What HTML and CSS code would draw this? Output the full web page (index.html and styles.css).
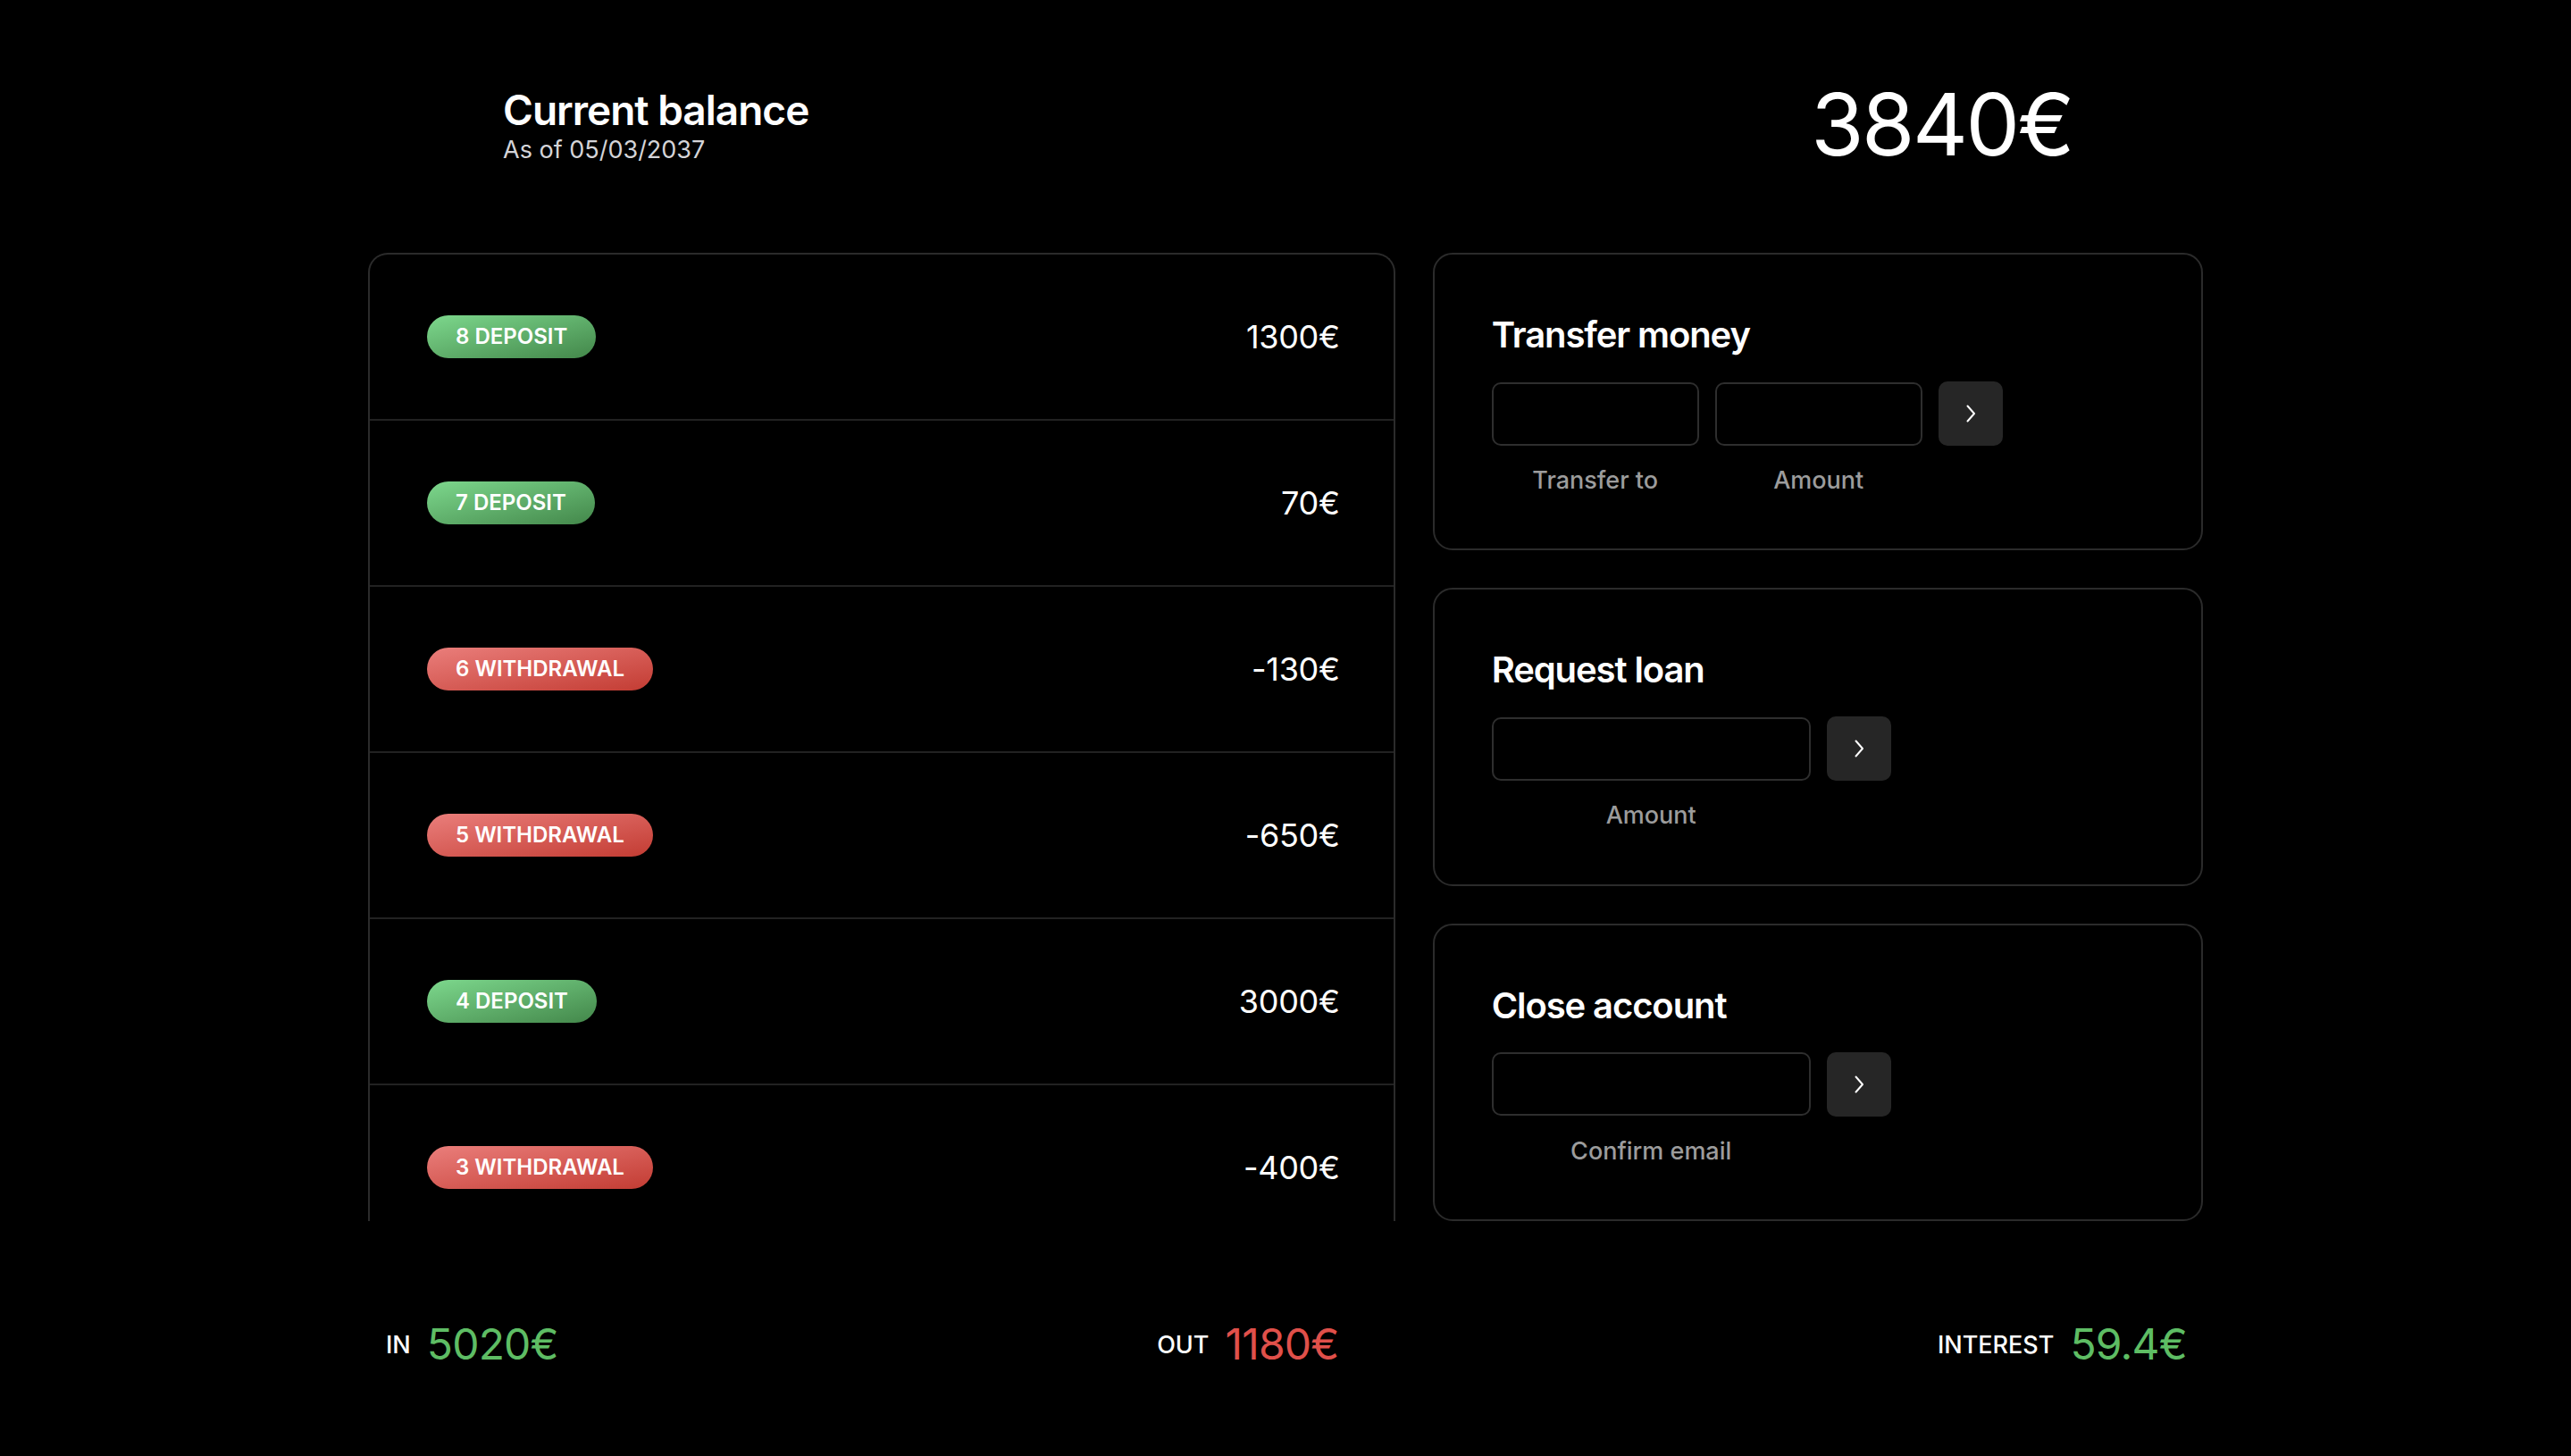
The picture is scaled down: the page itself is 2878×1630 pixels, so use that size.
FILE: index.html
```html
<!DOCTYPE html>
<html lang="en">
<head>
<meta charset="utf-8">
<title>Bankist</title>
<link rel="stylesheet" href="styles.css">
</head>
<body>
<div class="app">
  <header class="balance">
    <div class="balance-info">
      <p class="balance-label">Current balance</p>
      <p class="balance-date">As of 05/03/2037</p>
    </div>
    <p class="balance-value">3840€</p>
  </header>

  <main class="grid">
    <section class="movements">
      <div class="row"><span class="badge deposit">8 DEPOSIT</span><span class="amount">1300€</span></div>
      <div class="row"><span class="badge deposit">7 DEPOSIT</span><span class="amount">70€</span></div>
      <div class="row"><span class="badge withdrawal">6 WITHDRAWAL</span><span class="amount">-130€</span></div>
      <div class="row"><span class="badge withdrawal">5 WITHDRAWAL</span><span class="amount">-650€</span></div>
      <div class="row"><span class="badge deposit">4 DEPOSIT</span><span class="amount">3000€</span></div>
      <div class="row"><span class="badge withdrawal">3 WITHDRAWAL</span><span class="amount">-400€</span></div>
    </section>

    <div class="ops">
      <section class="card">
        <h2 class="card-title">Transfer money</h2>
        <form class="form form-transfer">
          <input class="field" type="text">
          <input class="field" type="number">
          <button class="go" type="button"><svg width="12" height="20" viewBox="0 0 12 20"><path d="M2.5 1.5 L10 10 L2.5 18.5" fill="none" stroke="#fff" stroke-width="2" stroke-linecap="round" stroke-linejoin="round"/></svg></button>
          <label class="field-label">Transfer to</label>
          <label class="field-label">Amount</label>
        </form>
      </section>

      <section class="card">
        <h2 class="card-title">Request loan</h2>
        <form class="form form-single">
          <input class="field" type="number">
          <button class="go" type="button"><svg width="12" height="20" viewBox="0 0 12 20"><path d="M2.5 1.5 L10 10 L2.5 18.5" fill="none" stroke="#fff" stroke-width="2" stroke-linecap="round" stroke-linejoin="round"/></svg></button>
          <label class="field-label">Amount</label>
        </form>
      </section>

      <section class="card">
        <h2 class="card-title">Close account</h2>
        <form class="form form-single">
          <input class="field" type="email">
          <button class="go" type="button"><svg width="12" height="20" viewBox="0 0 12 20"><path d="M2.5 1.5 L10 10 L2.5 18.5" fill="none" stroke="#fff" stroke-width="2" stroke-linecap="round" stroke-linejoin="round"/></svg></button>
          <label class="field-label">Confirm email</label>
        </form>
      </section>
    </div>
  </main>

  <footer class="summary">
    <div class="sum"><span class="sum-label">IN</span><span class="sum-value pos">5020€</span></div>
    <div class="sum"><span class="sum-label">OUT</span><span class="sum-value neg">1180€</span></div>
    <div class="sum"><span class="sum-label">INTEREST</span><span class="sum-value pos">59.4€</span></div>
  </footer>
</div>
</body>
</html>
```

FILE: styles.css
```css
* { box-sizing: border-box; }

html, body {
  margin: 0;
  padding: 0;
  background: #000;
  color: #fff;
  font-family: Inter, "Noto Sans", "Liberation Sans", sans-serif;
}

p, h2 { margin: 0; }

.app {
  width: 2054px;
  margin: 0 auto;
  padding-top: 81px;
}

/* Header */
.balance {
  display: flex;
  justify-content: space-between;
  align-items: center;
  padding: 0 146px 0 151px;
  height: 116px;
  margin-bottom: 86px;
}

.balance-label {
  font-size: 46px;
  font-weight: 600;
  line-height: 56px;
  letter-spacing: -1px;
}

.balance-date {
  font-size: 27px;
  line-height: 33px;
  color: #d4d4d8;
}

.balance-value {
  font-size: 96px;
  line-height: 116px;
  font-weight: 400;
  letter-spacing: -2.5px;
}

/* Main grid */
.grid {
  display: grid;
  grid-template-columns: 4fr 3fr;
  gap: 42px;
  height: 1084px;
}

.movements {
  border: 2px solid #2b2b2b;
  border-bottom: none;
  border-radius: 22px 22px 0 0;
  overflow: hidden;
}

.row {
  display: flex;
  justify-content: space-between;
  align-items: center;
  height: 186px;
  padding: 0 60px 0 64px;
  border-bottom: 2px solid #222;
}

.badge {
  display: inline-block;
  height: 48px;
  line-height: 48px;
  padding: 0 32px;
  border-radius: 24px;
  font-size: 24px;
  font-weight: 600;
  color: #fff;
}

.deposit {
  background: linear-gradient(to bottom right, #7dd88d, #43874a);
}

.withdrawal {
  background: linear-gradient(to bottom right, #ea7e7b, #c33c33);
}

.amount {
  font-size: 36px;
  font-weight: 400;
  letter-spacing: -0.3px;
}

/* Operations */
.ops {
  display: flex;
  flex-direction: column;
  gap: 42px;
}

.card {
  flex: 1;
  border: 2px solid #2b2b2b;
  border-radius: 22px;
  padding: 66px 64px 0;
}

.card-title {
  font-size: 40px;
  line-height: 48px;
  font-weight: 600;
  letter-spacing: -1.1px;
  margin-bottom: 28px;
}

.form {
  display: grid;
  column-gap: 18px;
  row-gap: 23px;
  align-items: center;
}

.form-transfer {
  grid-template-columns: 232px 232px 72px;
}

.form-single {
  grid-template-columns: 357px 72px;
}

.field {
  height: 71px;
  width: 100%;
  background: #000;
  border: 2px solid #2e2e2e;
  border-radius: 10px;
  color: #fff;
  font: inherit;
  outline: none;
}

.go {
  width: 72px;
  height: 72px;
  border: none;
  border-radius: 10px;
  background: #262626;
  display: flex;
  align-items: center;
  justify-content: center;
  padding: 0;
}

.field-label {
  font-size: 27px;
  line-height: 32px;
  font-weight: 500;
  color: #9c9c9c;
  text-align: center;
}

/* Summary */
.summary {
  display: flex;
  justify-content: space-between;
  align-items: center;
  padding: 0 18px 0 20px;
  margin-top: 109px;
}

.sum {
  display: flex;
  align-items: center;
  gap: 18px;
}

.sum-label {
  font-size: 27px;
  font-weight: 500;
  line-height: 33px;
}

.sum-value {
  font-size: 48px;
  line-height: 58px;
  font-weight: 400;
  letter-spacing: -0.8px;
}

.pos { color: #5ebd64; }
.neg { color: #e0504a; }
```
